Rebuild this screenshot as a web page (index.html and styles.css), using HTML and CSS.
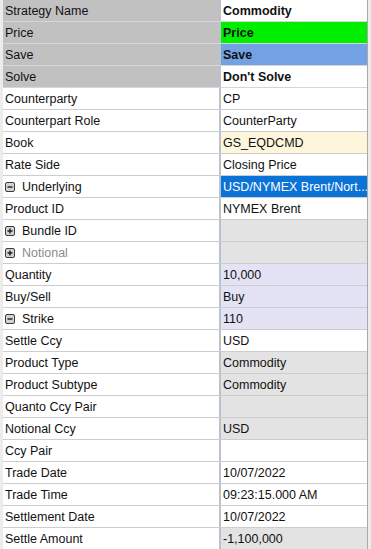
FILE: index.html
```html
<!DOCTYPE html>
<html lang="en">
<head>
    <meta charset="UTF-8">
    <meta name="viewport" content="width=device-width, initial-scale=1.0">
    <title>Strategy Properties</title>
    <link rel="stylesheet" href="styles.css">
</head>
<body>
    <div class="grid">
        <div class="row head"><div class="label">Strategy Name</div><div class="value bold">Commodity</div></div>
        <div class="row head"><div class="label">Price</div><div class="value bold green">Price</div></div>
        <div class="row head"><div class="label">Save</div><div class="value bold blue">Save</div></div>
        <div class="row head"><div class="label">Solve</div><div class="value bold">Don't Solve</div></div>
        <div class="row"><div class="label">Counterparty</div><div class="value">CP</div></div>
        <div class="row"><div class="label">Counterpart Role</div><div class="value">CounterParty</div></div>
        <div class="row"><div class="label">Book</div><div class="value cream">GS_EQDCMD</div></div>
        <div class="row"><div class="label">Rate Side</div><div class="value">Closing Price</div></div>
        <div class="row">
            <div class="label">
                <svg class="toggle" width="10" height="10" viewBox="0 0 10 10"><rect x="0.5" y="0.5" width="9" height="9" rx="1.5" fill="#d2d2d2" stroke="#3c3c3c"/><path d="M2.5 5h5" stroke="#1e1e1e" stroke-width="1.4"/></svg>
                Underlying
            </div>
            <div class="value selected">USD/NYMEX Brent/Nort...</div>
        </div>
        <div class="row"><div class="label">Product ID</div><div class="value">NYMEX Brent</div></div>
        <div class="row">
            <div class="label">
                <svg class="toggle" width="10" height="10" viewBox="0 0 10 10"><rect x="0.5" y="0.5" width="9" height="9" rx="1.5" fill="#d2d2d2" stroke="#3c3c3c"/><path d="M2.5 5h5M5 2.5v5" stroke="#1e1e1e" stroke-width="1.4"/></svg>
                Bundle ID
            </div>
            <div class="value grey"></div>
        </div>
        <div class="row">
            <div class="label muted">
                <svg class="toggle" width="10" height="10" viewBox="0 0 10 10"><rect x="0.5" y="0.5" width="9" height="9" rx="1.5" fill="#d2d2d2" stroke="#3c3c3c"/><path d="M2.5 5h5M5 2.5v5" stroke="#1e1e1e" stroke-width="1.4"/></svg>
                Notional
            </div>
            <div class="value grey"></div>
        </div>
        <div class="row"><div class="label">Quantity</div><div class="value lilac">10,000</div></div>
        <div class="row"><div class="label">Buy/Sell</div><div class="value lilac">Buy</div></div>
        <div class="row">
            <div class="label">
                <svg class="toggle" width="10" height="10" viewBox="0 0 10 10"><rect x="0.5" y="0.5" width="9" height="9" rx="1.5" fill="#d2d2d2" stroke="#3c3c3c"/><path d="M2.5 5h5" stroke="#1e1e1e" stroke-width="1.4"/></svg>
                Strike
            </div>
            <div class="value lilac">110</div>
        </div>
        <div class="row"><div class="label">Settle Ccy</div><div class="value">USD</div></div>
        <div class="row"><div class="label">Product Type</div><div class="value grey">Commodity</div></div>
        <div class="row"><div class="label">Product Subtype</div><div class="value grey">Commodity</div></div>
        <div class="row"><div class="label">Quanto Ccy Pair</div><div class="value grey"></div></div>
        <div class="row"><div class="label">Notional Ccy</div><div class="value grey">USD</div></div>
        <div class="row"><div class="label">Ccy Pair</div><div class="value"></div></div>
        <div class="row"><div class="label">Trade Date</div><div class="value">10/07/2022</div></div>
        <div class="row"><div class="label">Trade Time</div><div class="value">09:23:15.000 AM</div></div>
        <div class="row"><div class="label">Settlement Date</div><div class="value">10/07/2022</div></div>
        <div class="row"><div class="label">Settle Amount</div><div class="value grey">-1,100,000</div></div>
    </div>
</body>
</html>
```

FILE: styles.css
```css
body {
    margin: 0;
    background-color: #ececec;
    font-family: "Liberation Sans", Arial, sans-serif;
    font-size: 12.5px;
    color: #111;
}
.grid {
    margin-left: 3px;
    width: 364px;
    border-right: 1px solid #a9a9a9;
    background-color: #fff;
}
.row {
    display: flex;
    height: 21px;
    border-bottom: 1px solid #cdcdcd;
}
.row:last-child {
    border-bottom: none;
    height: 22px;
}
.label {
    width: 214px;
    padding-left: 2px;
    display: flex;
    align-items: center;
    gap: 7px;
    background-color: #fff;
    border-right: 2px solid #b9c3d0;
}
.head .label {
    background-color: #c1c1c1;
}
.head {
    border-bottom-color: #d6d6d6;
}
.label.muted {
    color: #8c8c8c;
}
.toggle {
    flex: none;
}
.value {
    flex: 1;
    display: flex;
    align-items: center;
    padding-left: 2px;
    white-space: nowrap;
    overflow: hidden;
    background-color: #fff;
}
.bold {
    font-weight: bold;
}
.green {
    background-color: #00ee00;
}
.blue {
    background-color: #73a2e4;
}
.cream {
    background-color: #fdf6dd;
}
.selected {
    background-color: #0b72d8;
    color: #fff;
}
.grey {
    background-color: #e3e3e3;
}
.lilac {
    background-color: #e3e3f5;
}
```
